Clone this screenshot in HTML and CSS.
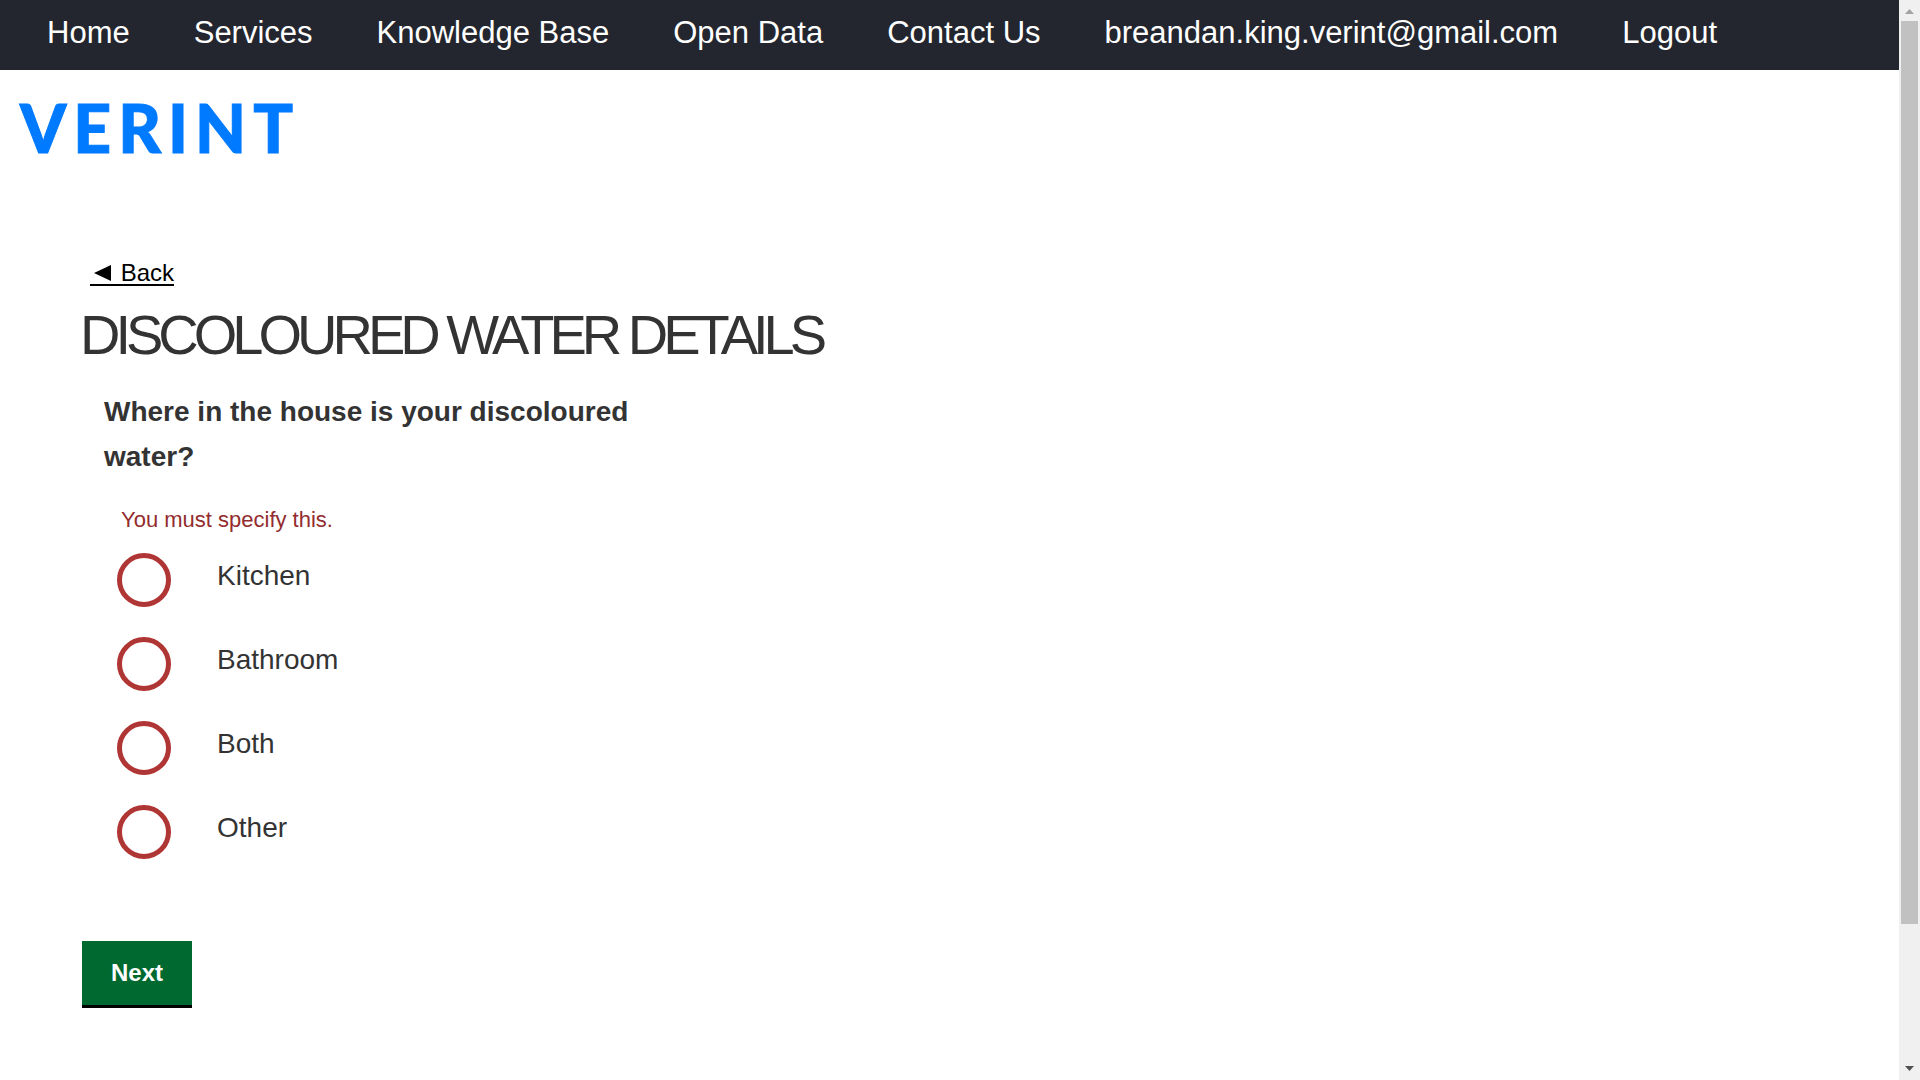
FILE: index.html
```html
<!DOCTYPE html>
<html lang="en">
<head>
<meta charset="utf-8">
<title>Discoloured water details</title>
<link rel="stylesheet" href="styles.css">
</head>
<body>
<div class="page">
  <nav class="nav">
    <a href="#">Home</a>
    <a href="#">Services</a>
    <a href="#">Knowledge Base</a>
    <a href="#">Open Data</a>
    <a href="#">Contact Us</a>
    <a href="#">breandan.king.verint@gmail.com</a>
    <a href="#">Logout</a>
  </nav>
  <header class="brand"><a class="logo" href="#">VERINT</a></header>
  <main class="content">
    <a class="back" href="#"><svg class="back-arrow" viewBox="0 0 24 18" aria-hidden="true"><path d="M4 9 21 1V17Z"/></svg> Back</a>
    <h1 class="title">DISCOLOURED WATER DETAILS</h1>
    <form class="form">
      <fieldset class="question">
        <legend>Where in the house is your discoloured water?</legend>
        <p class="error">You must specify this.</p>
        <label class="option"><input type="radio" name="place"><span>Kitchen</span></label>
        <label class="option"><input type="radio" name="place"><span>Bathroom</span></label>
        <label class="option"><input type="radio" name="place"><span>Both</span></label>
        <label class="option"><input type="radio" name="place"><span>Other</span></label>
      </fieldset>
      <button class="next" type="button">Next</button>
    </form>
  </main>
</div>
<div class="scrollbar" aria-hidden="true">
  <svg class="arrow arrow-up" viewBox="0 0 9 5"><path d="M0 5 4.5 0 9 5Z"/></svg>
  <div class="track"><div class="thumb"></div></div>
  <svg class="arrow arrow-down" viewBox="0 0 9 5"><path d="M0 0H9L4.5 5Z"/></svg>
</div>
</body>
</html>
```
FILE: styles.css
```css
* { box-sizing: border-box; }

body {
  display: flex;
  margin: 0;
  background: #fff;
  color: #333;
  font-family: "Liberation Sans", Arial, sans-serif;
  font-size: 28px;
}

.page { flex: 1; min-width: 0; }

.nav {
  display: flex;
  flex-wrap: wrap;
  column-gap: 64px;
  min-height: 70px;
  padding: 15px 47px 19px;
  background: #23262e;
}

.nav a {
  color: #fff;
  font-size: 31px;
  line-height: 36px;
  text-decoration: none;
}

.brand { padding: 18px 20px 6px; }

.logo {
  display: inline-block;
  color: #007aff;
  font-family: Lato, sans-serif;
  font-size: 66px;
  font-weight: 900;
  letter-spacing: 7px;
  line-height: 80px;
  text-decoration: none;
  -webkit-text-stroke: 1px #007aff;
}

.content { padding: 82px 82px 48px; }

.back {
  display: inline-block;
  margin-left: 8px;
  border-bottom: 2px solid #000;
  color: #000;
  font-size: 24px;
  line-height: 22px;
  text-decoration: none;
}

.back-arrow { width: 24px; height: 18px; vertical-align: -1px; }

.title {
  margin: 15px 0 22px -2px;
  font-size: 56px;
  font-weight: 400;
  letter-spacing: -5px;
  line-height: 64px;
}

.question {
  max-width: 600px;
  margin: 0;
  padding: 0 22px;
  border: 0;
}

.question legend {
  padding: 0;
  font-weight: 700;
  line-height: 45px;
}

.error {
  margin: 27px 0 19px 17px;
  color: #932c2e;
  font-size: 22px;
  line-height: 28px;
}

.option {
  display: flex;
  gap: 46px;
  height: 54px;
  margin: 0 0 30px 13px;
}

.option input {
  flex: none;
  width: 54px;
  height: 54px;
  margin: 0;
  border: 5px solid #b03535;
  border-radius: 50%;
  background: #fff;
  appearance: none;
}

.option input:checked { background: radial-gradient(#333 50%, #fff 52%); }

.option span { line-height: 45px; }

.next {
  margin-top: 52px;
  padding: 18px 29px;
  border: 0;
  border-bottom: 3px solid #000;
  background: #00692f;
  color: #fff;
  font-family: inherit;
  font-size: 24px;
  font-weight: 700;
  line-height: 28px;
}

.scrollbar {
  position: sticky;
  top: 0;
  display: flex;
  flex: none;
  flex-direction: column;
  align-items: center;
  width: 21px;
  height: 100vh;
  padding: 9px 0;
  background: #f0f0f0;
}

.arrow { width: 9px; height: 5px; }
.arrow-up { fill: #a3a3a3; }
.arrow-down { fill: #505050; }

.track { flex: 1; width: 17px; padding: 7px 0; }
.thumb { height: 87%; background: #c1c1c1; }
```
